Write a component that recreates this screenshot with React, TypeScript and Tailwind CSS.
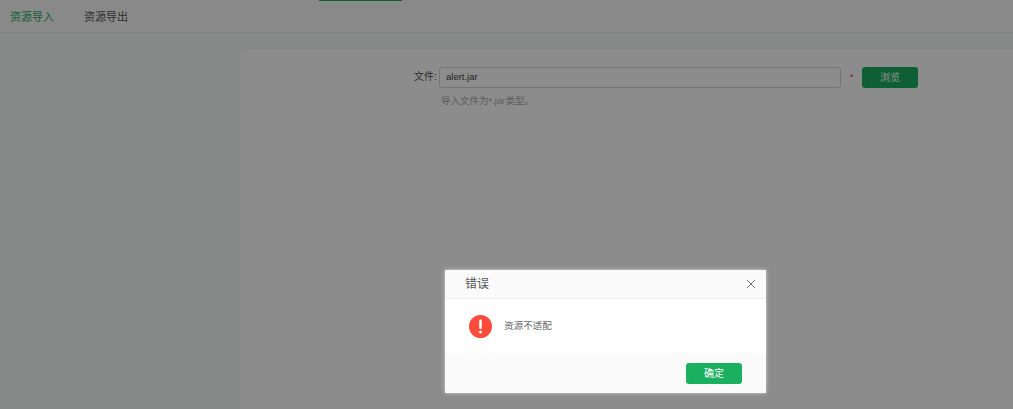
const FONT = "font-['Liberation_Sans','Noto_Sans_CJK_SC',sans-serif]";

const App = () => {
  return (
    <div className={`relative h-[409px] w-[1013px] overflow-hidden bg-[#f6f8f7] ${FONT}`}>
      {/* page under the mask */}
      <div className="relative h-[33px] border-b border-[#eceeed] bg-[#fafafa]">
        <div className="absolute left-[319px] top-0 h-px w-[83px] bg-[#1bb05f]" />
        <div className="flex h-[34px] items-center gap-[30px] pl-[10px] text-[11px]">
          <span className="text-[#1bb05f]">资源导入</span>
          <span className="text-[#555555]">资源导出</span>
        </div>
      </div>
      <div className="flex pt-[17px]">
        <div className="w-[240px] shrink-0" />
        <div className="h-[360px] grow rounded-tl-[4px] bg-white pt-[17px]">
          <div className="flex items-start pl-[174px]">
            <span className="mr-[4px] w-[21px] whitespace-nowrap text-[10px] leading-[20px] text-[#555555]">文件:</span>
            <div>
              <div className="flex h-[21px] w-[402px] items-center rounded-[3px] border border-[#d5d5d5] pl-[6px] text-[9.5px] text-[#444444]">
                alert.jar
              </div>
              <div className="mt-[6px] pl-[2px] text-[9.5px] text-[#aaaaaa]">导入文件为*.jar类型。</div>
            </div>
            <span className="ml-[9px] mr-[9px] w-[3px] text-[9px] leading-[21px] text-[#e53935]">*</span>
            <button className="h-[21px] w-[56px] rounded-[3px] bg-[#1bb05f] text-[10px] text-white">浏览</button>
          </div>
        </div>
      </div>

      {/* mask */}
      <div className="absolute inset-0 bg-black/45" />

      {/* dialog */}
      <div className="absolute left-[445px] top-[270px] w-[321px] overflow-hidden bg-white shadow-[0_0_4px_rgba(255,255,255,0.6)]">
        <div className="flex h-[29px] items-center justify-between border-b border-[#eeeeee] bg-[#fafafa] pl-[20px] pr-[10px]">
          <span className="text-[12px] text-[#555555]">错误</span>
          <svg width="10" height="10" viewBox="0 0 10 10" className="text-[#777777]">
            <path d="M1 1 L9 9 M9 1 L1 9" stroke="currentColor" strokeWidth="1" fill="none" />
          </svg>
        </div>
        <div className="flex h-[54px] items-center gap-[12px] pl-[24px]">
          <svg width="23" height="23" viewBox="0 0 23 23">
            <circle cx="11.5" cy="11.5" r="11.5" fill="#fb4b3c" />
            <rect x="10.2" y="4.5" width="2.6" height="9.5" rx="1.2" fill="#ffffff" />
            <circle cx="11.5" cy="17" r="1.5" fill="#ffffff" />
          </svg>
          <span className="text-[9.6px] text-[#666666]">资源不适配</span>
        </div>
        <div className="flex h-[40px] items-center justify-end bg-[#fafafa] pr-[24px]">
          <button className="h-[21px] w-[56px] rounded-[3px] bg-[#1bb05f] text-[10px] text-white">确定</button>
        </div>
      </div>
    </div>
  );
};

export default App;
